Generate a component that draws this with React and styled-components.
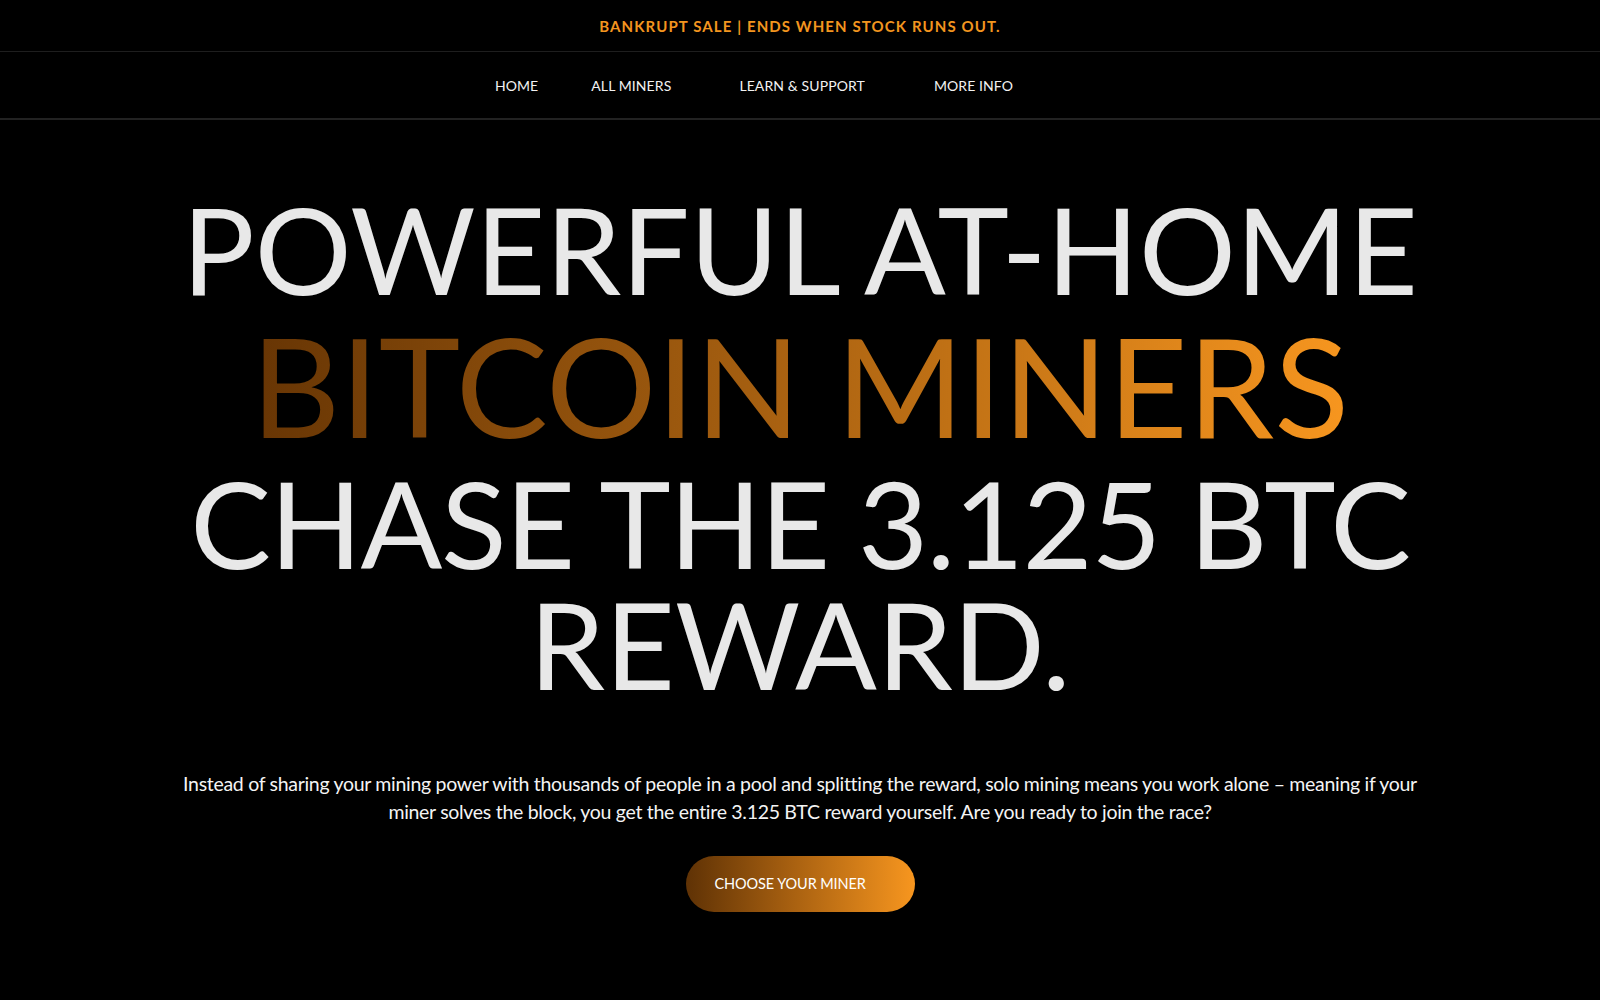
import styled, { createGlobalStyle } from "styled-components";

const GlobalStyle = createGlobalStyle`
    html, body {
        margin: 0;
        padding: 0;
        background: #000;
    }
    body {
        font-family: "Lato", "Liberation Sans", sans-serif;
        color: #ececec;
    }
    * { box-sizing: border-box; }
`

const Page = styled.div`
    min-height: 1000px;
    background: #000;
`

const Banner = styled.div`
    height: 52px;
    display: flex;
    align-items: center;
    justify-content: center;
    border-bottom: 1px solid #1e1e1e;
    color: #f3951f;
    font-size: 15px;
    font-weight: 700;
    letter-spacing: 1.1px;
`

const Nav = styled.nav`
    height: 68px;
    display: flex;
    align-items: center;
    justify-content: center;
    border-bottom: 2px solid #222;
    padding-right: 92px;
`

const NavItem = styled.a`
    color: #f2f2f2;
    font-size: 14px;
    letter-spacing: 0.1px;
    text-decoration: none;
    margin-right: ${props => props.gap}px;
`

const Hero = styled.section`
    display: flex;
    flex-direction: column;
    align-items: center;
    padding-top: 68px;
`

const Title = styled.h1`
    margin: 0;
    text-align: center;
    font-weight: 400;
    font-size: 121px;
    line-height: 1;
    color: #e8e8e8;
`

// 그라데이션 줄
const Gold = styled.span`
    display: block;
    font-size: 138px;
    line-height: 1.05;
    margin: 4px auto 4px;
    width: fit-content;
    background: linear-gradient(90deg, #673504 0%, #a45e10 45%, #f7961f 100%);
    -webkit-background-clip: text;
    background-clip: text;
    color: transparent;
`

const Line = styled.span`
    display: block;
    letter-spacing: ${props => props.tight ? "-1.5px" : "0"};
`

const Lead = styled.p`
    max-width: 1260px;
    margin: 66px 0 0;
    text-align: center;
    font-size: 19.5px;
    line-height: 28.5px;
    font-weight: 400;
    color: #f4f4f4;
    letter-spacing: -0.3px;
`

const Cta = styled.a`
    margin-top: 29px;
    width: 229px;
    height: 56px;
    border-radius: 28px;
    display: flex;
    align-items: center;
    padding-left: 29px;
    background: linear-gradient(90deg, #5f3205 0%, #a65f10 45%, #f7961f 100%);
    color: #fff;
    font-size: 14.5px;
    letter-spacing: -0.1px;
    text-decoration: none;
`

export default function App() {
    return (
        <Page>
            <GlobalStyle />
            <Banner>BANKRUPT SALE | ENDS WHEN STOCK RUNS OUT.</Banner>
            <Nav>
                <NavItem gap={53} href="#">HOME</NavItem>
                <NavItem gap={68} href="#">ALL MINERS</NavItem>
                <NavItem gap={69} href="#">LEARN &amp; SUPPORT</NavItem>
                <NavItem gap={0} href="#">MORE INFO</NavItem>
            </Nav>
            <Hero>
                <Title>
                    <Line>POWERFUL AT-HOME</Line>
                    <Gold>BITCOIN MINERS</Gold>
                    <Line tight>CHASE THE 3.125 BTC</Line>
                    <Line>REWARD.</Line>
                </Title>
                <Lead>
                    Instead of sharing your mining power with thousands of people in a pool and splitting the reward, solo mining means you work alone – meaning if your miner solves the block, you get the entire 3.125 BTC reward yourself. Are you ready to join the race?
                </Lead>
                <Cta href="#">CHOOSE YOUR MINER</Cta>
            </Hero>
        </Page>
    );
}
